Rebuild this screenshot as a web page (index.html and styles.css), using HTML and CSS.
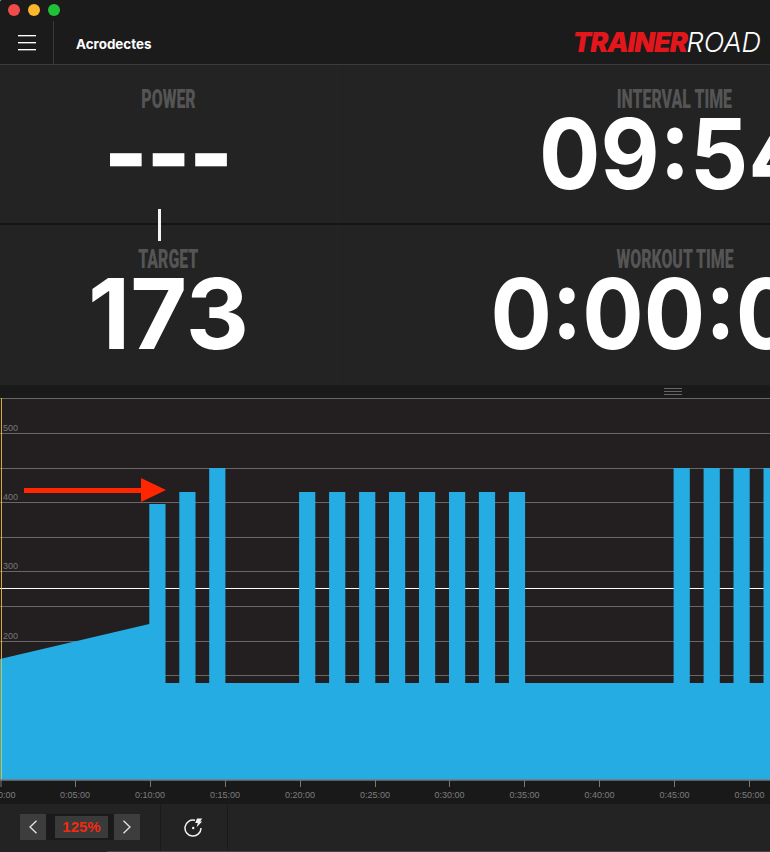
FILE: index.html
```html
<!DOCTYPE html>
<html lang="en">
<head>
<meta charset="utf-8">
<title>TrainerRoad</title>
<link rel="stylesheet" href="styles.css">
</head>
<body>
<div class="app">
  <header class="topbar">
    <div class="lights"><i class="light red"></i><i class="light amber"></i><i class="light green"></i></div>
    <div class="navrow">
      <button class="menu" aria-label="Menu"><span></span><span></span><span></span></button>
      <div class="title">Acrodectes</div>
      <div class="logo"><b>TRAINER</b><em>ROAD</em></div>
    </div>
  </header>
  <main class="metrics">
    <section class="metric first-row">
      <h2 class="label"><span>POWER</span></h2>
      <div class="value dashes">---</div>
    </section>
    <section class="metric first-row wide">
      <h2 class="label"><span>INTERVAL TIME</span></h2>
      <div class="value">09:54</div>
    </section>
    <section class="metric">
      <h2 class="label"><span>TARGET</span></h2>
      <div class="value target">173</div>
    </section>
    <section class="metric wide">
      <h2 class="label"><span>WORKOUT TIME</span></h2>
      <div class="value">0:00:00</div>
    </section>
    <div class="marker"></div>
  </main>
  <div class="strip"><div class="grip"><span></span><span></span><span></span></div></div>
  <svg class="chart" viewBox="0 398 770 406" width="770" height="406" aria-label="Workout chart">
    <rect x="0" y="398" width="770" height="382" fill="#231f20"/>
    <rect x="0" y="780" width="770" height="24" fill="#1a191a"/>
    <g class="grid">
      <line x1="0" x2="770" y1="398.5" y2="398.5"/>
      <line x1="0" x2="770" y1="433.5" y2="433.5"/>
      <line x1="0" x2="770" y1="468.5" y2="468.5"/>
      <line x1="0" x2="770" y1="502.5" y2="502.5"/>
      <line x1="0" x2="770" y1="537.5" y2="537.5"/>
      <line x1="0" x2="770" y1="571.5" y2="571.5"/>
      <line x1="0" x2="770" y1="606.5" y2="606.5"/>
      <line x1="0" x2="770" y1="641.5" y2="641.5"/>
      <line x1="0" x2="770" y1="675.5" y2="675.5"/>
    </g>
    <line class="ftp" x1="0" x2="770" y1="588.5" y2="588.5"/>
    <g class="ylabels">
      <text x="3" y="431">500</text>
      <text x="3" y="500">400</text>
      <text x="3" y="569">300</text>
      <text x="3" y="639">200</text>
    </g>
    <g class="bars">
      <polygon points="0,659 149.3,624 149.3,504 165.5,504 165.5,684 0,684"/>
      <rect x="179.3" y="492" width="16.2" height="192"/>
      <rect x="209.2" y="468" width="16.2" height="216"/>
      <rect x="299.1" y="492" width="16.2" height="192"/>
      <rect x="329.1" y="492" width="16.2" height="192"/>
      <rect x="359.1" y="492" width="16.2" height="192"/>
      <rect x="389" y="492" width="16.2" height="192"/>
      <rect x="419" y="492" width="16.2" height="192"/>
      <rect x="449" y="492" width="16.2" height="192"/>
      <rect x="478.9" y="492" width="16.2" height="192"/>
      <rect x="508.9" y="492" width="16.2" height="192"/>
      <rect x="673.6" y="468" width="16.2" height="216"/>
      <rect x="703.6" y="468" width="16.2" height="216"/>
      <rect x="733.5" y="468" width="16.2" height="216"/>
      <rect x="763.5" y="468" width="16.2" height="216"/>
      <rect x="0" y="683" width="770" height="97"/>
    </g>
    <line class="cursor" x1="1.5" x2="1.5" y1="397" y2="780"/>
    <line class="axis" x1="0" x2="770" y1="780" y2="780"/>
    <g class="ticks">
      <line x1="1" x2="1" y1="780" y2="787"/>
      <line x1="75.5" x2="75.5" y1="780" y2="787"/>
      <line x1="150.5" x2="150.5" y1="780" y2="787"/>
      <line x1="225.5" x2="225.5" y1="780" y2="787"/>
      <line x1="300.5" x2="300.5" y1="780" y2="787"/>
      <line x1="375.5" x2="375.5" y1="780" y2="787"/>
      <line x1="449.5" x2="449.5" y1="780" y2="787"/>
      <line x1="524.5" x2="524.5" y1="780" y2="787"/>
      <line x1="599.5" x2="599.5" y1="780" y2="787"/>
      <line x1="674.5" x2="674.5" y1="780" y2="787"/>
      <line x1="749.5" x2="749.5" y1="780" y2="787"/>
    </g>
    <g class="xlabels">
      <text x="0.5" y="798">0:00:00</text>
      <text x="75" y="798">0:05:00</text>
      <text x="150" y="798">0:10:00</text>
      <text x="225" y="798">0:15:00</text>
      <text x="300" y="798">0:20:00</text>
      <text x="375" y="798">0:25:00</text>
      <text x="449.5" y="798">0:30:00</text>
      <text x="524.5" y="798">0:35:00</text>
      <text x="599.5" y="798">0:40:00</text>
      <text x="674.5" y="798">0:45:00</text>
      <text x="749.5" y="798">0:50:00</text>
    </g>
    <g class="arrow">
      <rect x="24" y="488" width="118" height="5"/>
      <polygon points="141,478 166,490 141,502"/>
    </g>
  </svg>
  <footer class="controls">
    <div class="zoom-group">
      <button class="step" aria-label="Previous"><svg width="10" height="14" viewBox="0 0 10 14"><path d="M8.5 0.8 L2 7 L8.5 13.2"/></svg></button>
      <div class="pct"><span>125%</span></div>
      <button class="step" aria-label="Next"><svg width="10" height="14" viewBox="0 0 10 14"><path d="M1.5 0.8 L8 7 L1.5 13.2"/></svg></button>
    </div>
    <div class="tool">
      <svg width="20" height="20" viewBox="0 0 20 20" class="gauge">
        <path d="M11 3.3 A8 8 0 1 0 17 11"/>
        <polygon class="fill" points="13,1.5 18.2,1.5 16.2,4.5 18.2,4.5 12.6,10.2 13.8,6 11.2,6"/>
        <circle class="fill" cx="9.2" cy="11" r="1.2"/>
      </svg>
    </div>
  </footer>
</div>
</body>
</html>
```
FILE: styles.css
```css
* { box-sizing: border-box; }
html, body { margin: 0; padding: 0; background: #999; }
body { width: 770px; height: 852px; overflow: hidden; font-family: "Inter", "Liberation Sans", sans-serif; }
.app { width: 770px; height: 852px; display: flex; flex-direction: column; overflow: hidden; position: relative; background: #1c1b1c; border-top-left-radius: 3px; }

.topbar { height: 65px; background: #1c1b1c; border-bottom: 1px solid #3c3c3c; display: flex; flex-direction: column; flex: none; }
.lights { display: flex; gap: 8px; padding: 4px 0 0 8px; height: 21px; }
.light { width: 12px; height: 12px; border-radius: 50%; display: block; }
.red { background: #f24c4a; }
.amber { background: #fdb52c; }
.green { background: #1fc137; }
.navrow { display: flex; align-items: center; height: 43px; }
.menu { width: 54px; height: 43px; background: none; border: 0; border-right: 1px solid #3a3a3a; padding: 14px 0 0 18px; display: flex; flex-direction: column; gap: 6px; }
.menu span { display: block; width: 18px; height: 1px; background: #fff; box-shadow: 0 1px 0 rgba(255, 255, 255, 0.35); }
.title { margin-left: 22px; font-size: 13.4px; font-weight: 700; color: #fff; padding-top: 3px; }
.logo { margin-left: auto; padding-right: 9px; font-size: 27px; line-height: 1; font-family: "Inter", sans-serif; font-style: italic; display: flex; }
.logo b { color: #e3161b; font-weight: 900; letter-spacing: -1.1px; }
.logo em { color: #fff; font-weight: 300; letter-spacing: 0; }

.metrics { display: grid; grid-template-columns: 337px 674px; grid-template-rows: 160px 160px; height: 320px; background: #232323; position: relative; overflow: hidden; flex: none; width: 770px; }
.metric { text-align: center; padding-top: 24px; overflow: hidden; height: 160px; }
.first-row { border-bottom: 2px solid #141414; }
.wide { border-left: 1px solid #252525; }
.label { margin: 0; height: 20px; line-height: 20px; font-size: 26px; font-weight: 900; color: #555; font-family: "Roboto", "Liberation Sans", sans-serif; }
.label span { display: inline-block; transform: scaleX(0.61); white-space: nowrap; }
.value { font-size: 98px; line-height: 72px; font-weight: 700; color: #fff; margin-top: 9px; white-space: nowrap; transform: scaleX(0.93); }
.target { transform: none; }
.dashes { -webkit-text-stroke: 1.5px #fff; }
.marker { position: absolute; left: 158px; top: 144px; width: 3px; height: 32px; background: #f4f4f4; }

.strip { height: 13px; background: #1b1a1b; flex: none; padding: 3px 0 0 664px; }
.grip { width: 18px; display: flex; flex-direction: column; gap: 2px; }
.grip span { display: block; height: 1px; background: #666; }

.chart { display: block; flex: none; }
.grid line { stroke: #6a6767; stroke-width: 1; }
.ftp { stroke: #fff; stroke-width: 1; }
.ylabels text { font: 9px "Liberation Sans", sans-serif; fill: #777; }
.xlabels text { font: 9px "Liberation Sans", sans-serif; fill: #7d7d7d; text-anchor: middle; }
.bars rect, .bars polygon { fill: #25ade3; }
.cursor { stroke: #e9bd2d; stroke-width: 1; opacity: 0.9; }
.axis { stroke: #777; stroke-width: 1.5; }
.ticks line { stroke: #777; stroke-width: 1; }
.arrow rect, .arrow polygon { fill: #ff2600; }

.controls { flex: 1; background: #232323; display: flex; position: relative; }
.controls::after { content: ""; position: absolute; left: 107px; right: 0; bottom: 0; height: 1px; background: #444; }
.zoom-group { width: 161px; padding: 10px 0 0 20px; border-right: 1px solid #1a1a1a; display: flex; align-items: flex-start; }
.step { width: 26px; height: 26px; border: 0; padding: 0; background: #3d3d3d; display: flex; align-items: center; justify-content: center; }
.step path { fill: none; stroke: #e4e4e4; stroke-width: 1.3; }
.pct { width: 68px; height: 26px; background: #1a1a1a; padding: 2px 6px 2px 9px; }
.pct span { display: block; height: 22px; width: 53px; background: #3a3a3a; color: #f02a10; font: 700 15px/22px "Liberation Sans", sans-serif; text-align: center; }
.tool { width: 67px; border-right: 1px solid #1a1a1a; padding: 13px 0 0 23px; }
.gauge path { fill: none; stroke: #f2f2f2; stroke-width: 1.5; }
.gauge .fill { fill: #f2f2f2; }
```
